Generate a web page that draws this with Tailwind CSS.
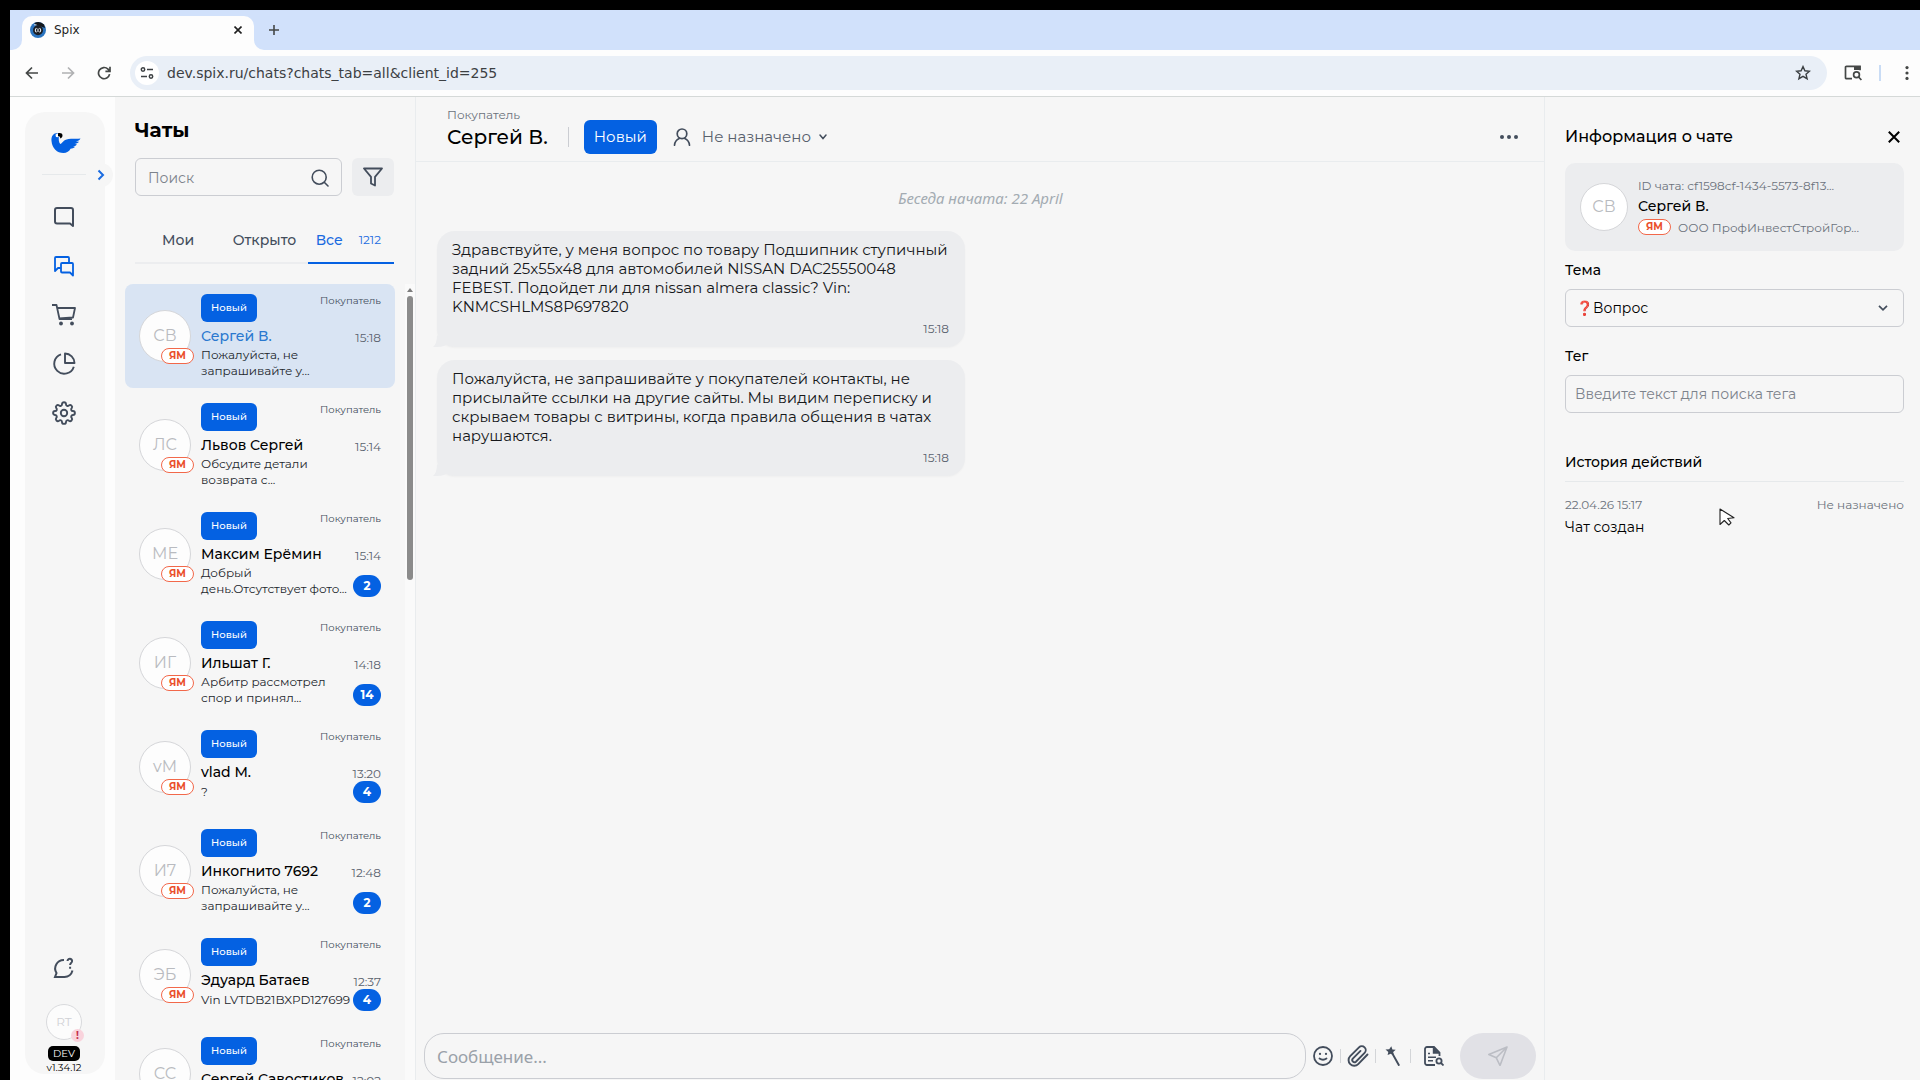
<!DOCTYPE html>
<html lang="ru">

<head>
  <meta charset="UTF-8">
  <meta name="viewport" content="width=device-width, initial-scale=1.0">
  <title>Spix</title>
  <script src="https://cdn.jsdelivr.net/npm/@tailwindcss/browser@4"></script>
</head>

<body class="h-screen overflow-hidden flex flex-col border-l-10 border-t-10 border-black bg-[#fdfdfd] text-black font-['Montserrat','Inter',sans-serif]">

  <!-- Browser tabs -->
  <div class="h-10 shrink-0 bg-[#d1e1fb] flex items-end pl-3 font-['DejaVu_Sans','Noto_Sans',sans-serif]">
    <div class="relative h-[34px] w-[232px] bg-[#fdfdfd] rounded-t-[10px] flex items-center pl-2 pr-2 pb-1.5">
      <svg class="absolute bottom-0 -left-2.5 w-2.5 h-2.5" viewBox="0 0 10 10"><path d="M10 0v10H0A10 10 0 0 0 10 0z" fill="#fdfdfd" /></svg>
      <svg class="absolute bottom-0 -right-2.5 w-2.5 h-2.5" viewBox="0 0 10 10"><path d="M0 0v10h10A10 10 0 0 1 0 0z" fill="#fdfdfd" /></svg>
      <svg class="w-4 h-4" viewBox="0 0 16 16">
        <circle cx="8" cy="8" r="8" fill="#2a74c0" />
        <path d="M4.500 1Q10-1.400 14 2.600L15 6 11 4.500 5 3z" fill="#15181c" />
        <circle cx="8" cy="8.200" r="5" fill="#1b1e24" />
        <path d="M4 2.800h2.500" stroke="#cfe0f2" stroke-width="1" />
        <path d="M6.600 6.200A2.200 2.200 0 0 0 6.600 10.200M9.400 6.200a2.200 2.200 0 0 1 0 4M8 6.500v3.500" fill="none" stroke="#e8eef4" stroke-width="1.100" />
      </svg>
      <span class="ml-2 flex-1 text-[12px] text-[#1f1f1f]">Spix</span>
      <button aria-label="Закрыть вкладку" class="w-4 h-4 flex items-center justify-center">
        <svg class="w-2 h-2" viewBox="0 0 8 8" stroke="#1f1f1f" stroke-width="1.600"><path d="M.5.5l7 7M7.500.5l-7 7" /></svg>
      </button>
    </div>
    <button aria-label="Новая вкладка" class="w-10 h-[28px] mb-1.5 flex items-center justify-center">
      <svg class="w-2.5 h-2.5" viewBox="0 0 10 10" stroke="#444746" stroke-width="1.600"><path d="M5 0v10M0 5h10" /></svg>
    </button>
  </div>

  <!-- Address bar -->
  <div class="h-[47px] shrink-0 bg-[#fdfdfd] border-b border-[#d5d9d8] flex items-center font-['DejaVu_Sans','Noto_Sans',sans-serif]">
    <div class="w-[120px] flex items-center justify-between pl-[15px] pr-[19px]">
      <button aria-label="Назад"><svg class="w-3.5 h-3.5" viewBox="0 0 14 14" fill="none" stroke="#444746" stroke-width="1.700"><path d="M13 7H2M7 1.500L1.500 7 7 12.500" /></svg></button>
      <button aria-label="Вперёд" disabled><svg class="w-3.5 h-3.5" viewBox="0 0 14 14" fill="none" stroke="#b0b1b3" stroke-width="1.700"><path d="M1 7h11M7 1.500L12.500 7 7 12.500" /></svg></button>
      <button aria-label="Обновить"><svg class="w-3.5 h-3.5" viewBox="0 0 14 14" fill="none" stroke="#444746" stroke-width="1.700"><path d="M12.600 8.200A5.600 5.600 0 1 1 11 3.100L13 5.200M13 .8v4.600H8.400" /></svg></button>
    </div>
    <div class="flex-1 h-[34px] bg-[#e9eff7] rounded-full flex items-center pl-[5px] pr-4">
      <div class="w-6 h-6 rounded-full bg-white flex items-center justify-center">
        <svg class="w-3.5 h-3.5" viewBox="0 0 14 14" fill="none" stroke="#3c4043" stroke-width="1.500"><circle cx="3" cy="3.500" r="1.700" /><path d="M7 3.500h6M1 10.500h6" /><circle cx="11" cy="10.500" r="1.700" /></svg>
      </div>
      <input aria-label="Адресная строка" class="ml-2 flex-1 bg-transparent outline-none text-[14px] text-[#3c4043]" value="dev.spix.ru/chats?chats_tab=all&amp;client_id=255">
      <button aria-label="В закладки"><svg class="w-4 h-4" viewBox="0 0 16 16" fill="none" stroke="#3c4043" stroke-width="1.400"><path d="M8 1.600l1.900 4.200 4.600.4-3.500 3 1.100 4.500L8 11.300l-4.100 2.400L5 9.200l-3.500-3 4.600-.4z" /></svg></button>
    </div>
    <div class="w-[93px] flex items-center pl-[17px]">
      <button aria-label="Поиск по вкладке"><svg class="w-[18px] h-4" viewBox="0 0 18 16" fill="none" stroke="#444746" stroke-width="1.700"><path d="M8 13.700H2.500a1 1 0 0 1-1-1V2.300a1 1 0 0 1 1-1H16v4" /><path d="M10 1h6.500v4H10z" fill="#444746" stroke="none" /><circle cx="12.500" cy="9.800" r="2.900" /><path d="M14.600 12l2.800 3" /></svg></button>
      <div class="ml-[17px] w-0.5 h-4 bg-[#c9dcf5]"></div>
      <button aria-label="Меню" class="ml-6"><svg class="w-1 h-3.5" viewBox="0 0 4 14" fill="#444746"><circle cx="2" cy="1.600" r="1.600" /><circle cx="2" cy="7" r="1.600" /><circle cx="2" cy="12.400" r="1.600" /></svg></button>
    </div>
  </div>

  <div class="flex-1 min-h-0 flex">

    <!-- Navigation rail -->
    <nav class="w-[105px] shrink-0 pl-[15px] pr-2.5 pt-[15px] pb-1.5 flex">
      <div class="relative w-20 bg-[#f6f6f6] rounded-[20px] flex flex-col items-center pt-5 pr-0.5">
        <svg class="ml-1 w-[30px] h-[22px]" viewBox="0 0 30 22">
          <path d="M.5 9C0 4 2.500 1 6.500 1c1.500 0 2 1 1.500 3-.6 3-.2 6.500 1.200 8 2-.3 2.800-4.200 8.300-5 4-.6 8 0 12-.5-1 1.800-2.500 2.600-4.500 3l3 .2c-1.200 1.500-2.800 2-4.500 2.100l2.500.6c-1.200 1.300-2.500 1.800-4 1.900l2 .7c-1.500 1.200-3 1.500-4.500 1.800C18.500 19.500 15.500 21 12.500 21 6 21 1.200 16.500.5 9z" fill="#0461e2" />
          <path d="M4.500 2.800C5.500 1.400 6.800 1.200 8 1.600L7.300 5.200 5 5z" fill="#fff" />
          <path d="M7 1.200c2.200-.6 4.500 0 4.500 2.200 0 1.500-.8 2.300-2.200 3C9.300 5 8.500 4 7 4z" fill="#000" />
        </svg>
        <div class="mt-5 w-11 h-px bg-[#e6e9eb]"></div>
        <button aria-label="Развернуть меню" class="absolute top-[51px] -right-2 w-6 h-6 rounded-full bg-[#f6f6f6] flex items-center justify-start pl-2">
          <svg class="w-2 h-3" viewBox="0 0 8 12" fill="none" stroke="#1a6be0" stroke-width="2"><path d="M1.500 1.500L6 6l-4.500 4.500" /></svg>
        </button>
        <div class="mt-[30px] flex flex-col gap-[25px] text-[#434d5c]">
          <a href="#" aria-label="Сообщения"><svg class="w-6 h-6" viewBox="0 0 24 24" fill="none" stroke="currentColor" stroke-width="2" stroke-linejoin="round"><path d="M21 21l-3-2.500H5a2 2 0 0 1-2-2V5a2 2 0 0 1 2-2h14a2 2 0 0 1 2 2z" /></svg></a>
          <a href="#" aria-label="Чаты" class="text-[#0461e2]"><svg class="w-6 h-6" viewBox="0 0 24 24" fill="none" stroke="currentColor" stroke-width="1.800" stroke-linejoin="round"><path d="M8.500 14H6l-3 3V4a1 1 0 0 1 1-1h12a1 1 0 0 1 1 1v4" /><path d="M10 9h10a1 1 0 0 1 1 1v11.500L18 18.500h-8a1 1 0 0 1-1-1V10a1 1 0 0 1 1-1z" /></svg></a>
          <a href="#" aria-label="Заказы"><svg class="w-6 h-6" viewBox="0 0 24 24" fill="none" stroke="currentColor" stroke-width="1.800" stroke-linejoin="round"><path d="M0 2h4.500l3 14h12.500M5 5h18l-2 9.500L7 15.500" /><circle cx="9" cy="20.500" r="1.900" fill="currentColor" stroke="none" /><circle cx="20" cy="20.500" r="1.900" fill="currentColor" stroke="none" /></svg></a>
          <a href="#" aria-label="Статистика"><svg class="w-6 h-6" viewBox="0 0 24 24" fill="none" stroke="currentColor" stroke-width="1.900" stroke-linejoin="round"><path d="M9 2.300a10 10 0 1 0 12.800 12.400" /><path d="M13 1.500V11h9.500A9.600 9.600 0 0 0 13 1.500z" /></svg></a>
          <a href="#" aria-label="Настройки"><svg class="w-6 h-6" viewBox="0 0 24 24" fill="none" stroke="currentColor" stroke-width="1.900" stroke-linejoin="round"><circle cx="12" cy="12" r="3.200" /><path d="M10 3.200a2 2 0 0 1 4 0c0 1.600 1.800 2.300 2.900 1.200a2 2 0 0 1 2.800 2.800c-1.100 1.100-.4 2.800 1.200 2.800a2 2 0 0 1 0 4c-1.600 0-2.300 1.800-1.200 2.900a2 2 0 0 1-2.800 2.800c-1.100-1.100-2.900-.4-2.900 1.200a2 2 0 0 1-4 0c0-1.600-1.800-2.300-2.900-1.200a2 2 0 0 1-2.800-2.800c1.100-1.100.4-2.900-1.200-2.900a2 2 0 0 1 0-4c1.600 0 2.300-1.700 1.200-2.800a2 2 0 0 1 2.800-2.800c1.100 1.100 2.900.4 2.900-1.200z" /></svg></a>
        </div>
        <div class="mt-auto flex flex-col items-center">
          <a href="#" aria-label="Помощь" class="text-[#434d5c]"><svg class="w-6 h-6" viewBox="0 0 24 24" fill="none" stroke="currentColor" stroke-width="2"><path d="M12 4a8.500 8.500 0 0 0-7.500 13L3 21h9.500a8.500 8.500 0 0 0 8-6.500" /><path d="M15.500 5a2.300 2.300 0 1 1 3.800 1.800c-.7.600-1.200 1-1.200 2.200M18.100 10.700v2" /></svg></a>
          <div class="relative mt-6 w-9 h-9 rounded-full border border-[#d9dadd] bg-[#fcfcfc] flex items-center justify-center text-[12px] text-[#d0d1d5]">
            RT
            <span class="absolute -right-[3px] -bottom-[3px] w-[13px] h-[13px] rounded-full bg-[#f9d3dc] text-[#c5304f] text-[10px] font-bold leading-[13px] text-center">!</span>
          </div>
          <span class="mt-1.5 h-[15px] w-8 rounded-[5px] bg-black text-white text-[10px] leading-[15px] text-center">DEV</span>
          <span class="text-[10px] leading-[13px]">v1.34.12</span>
        </div>
      </div>
    </nav>

    <!-- Chat list -->
    <section class="w-[301px] shrink-0 bg-[#f6f6f6] border-r border-[#e9ecee] flex flex-col">
      <div class="pl-5 pr-[21px] pt-[18px]">
        <h1 class="text-[20px] leading-[30px] font-bold">Чаты</h1>
        <div class="mt-[13px] flex gap-2.5">
          <label class="flex-1 min-w-0 h-[38px] rounded-md border border-[#cbcdd2] flex items-center px-3 pt-0.5">
            <input class="flex-1 min-w-0 bg-transparent outline-none text-[14px] placeholder:text-[#7d838c]" placeholder="Поиск" aria-label="Поиск">
            <svg class="w-[18px] h-[18px]" viewBox="0 0 18 18" fill="none" stroke="#434d5c" stroke-width="1.600" stroke-linecap="round"><circle cx="8.200" cy="8.200" r="7" /><path d="M13.500 13.500l3.500 3.500" /></svg>
          </label>
          <button aria-label="Фильтр" class="w-[42px] h-[38px] rounded-md bg-[#ecedef] flex items-center justify-center">
            <svg class="w-5 h-5" viewBox="0 0 20 20" fill="none" stroke="#434d5c" stroke-width="1.800" stroke-linejoin="round"><path d="M1 1.500h18l-7 8.300v8.700l-4-2V9.800z" /></svg>
          </button>
        </div>
        <div class="mt-5 h-12 grid grid-cols-3 text-[14px] font-medium text-[#434d5c]">
          <button class="border-b-2 border-[#ecedef] pt-0.5">Мои</button>
          <button class="border-b-2 border-[#ecedef] pt-0.5">Открыто</button>
          <button class="border-b-2 border-[#0461e2] text-[#1a6be0] flex items-center justify-between pl-2 pr-[13px] pt-0.5">Все <span class="text-[12px] font-normal">1212</span></button>
        </div>
      </div>
      <div class="mt-5 flex-1 min-h-0 flex">
        <div id="chat-list" class="flex-1 min-w-0 pl-2.5 pr-2.5 overflow-hidden"></div>
        <div class="w-2.5 bg-[#fafafa] flex flex-col items-center">
          <svg class="mt-1 w-1.5 h-1" viewBox="0 0 6 4"><path d="M3 0l3 4H0z" fill="#7d7d7d" /></svg>
          <div class="mt-1 w-1.5 h-[284px] rounded-full bg-[#8b8b8b]"></div>
        </div>
      </div>
    </section>

    <!-- Conversation -->
    <main class="flex-1 min-w-0 bg-[#f6f6f6] flex flex-col">
      <header class="h-[65px] shrink-0 border-b border-[#e9ecee] flex items-end pl-[31px] pr-[26px] pb-[7px]">
        <div>
          <div class="text-[12px] leading-[10px] text-[#6b727c]">Покупатель</div>
          <h2 class="text-[20px] leading-[34px] font-medium">Сергей В.</h2>
        </div>
        <div class="ml-5 mb-[7px] w-px h-5 bg-[#cbcdd2]"></div>
        <button class="ml-[15px] w-[73px] h-[34px] rounded-md bg-[#0461e2] text-white text-[15px]">Новый</button>
        <button class="ml-4 h-[34px] flex items-center text-[15px] text-[#59616d]">
          <svg class="w-[18px] h-[18px] mr-[11px]" viewBox="0 0 18 18" fill="none" stroke="#434d5c" stroke-width="1.700" stroke-linecap="round"><circle cx="9" cy="5.800" r="4.800" /><path d="M1.500 17.200c.3-3.400 2.200-5.600 4.700-6.700M16.500 17.200c-.3-3.400-2.200-5.600-4.700-6.700" /></svg>
          Не назначено
          <svg class="ml-2 w-2 h-1.5" viewBox="0 0 8 6" fill="none" stroke="#434d5c" stroke-width="1.500" stroke-linecap="round"><path d="M1 1l3 3.500L7 1" /></svg>
        </button>
        <button aria-label="Ещё" class="ml-auto h-[34px]">
          <svg class="w-[18px] h-1" viewBox="0 0 18 4" fill="#434d5c"><circle cx="2" cy="2" r="2" /><circle cx="9" cy="2" r="2" /><circle cx="16" cy="2" r="2" /></svg>
        </button>
      </header>
      <div class="flex-1 min-h-0 pt-6 pl-[21px] pr-5">
        <p class="text-center font-['Noto_Sans',sans-serif] text-[15px] leading-6 italic text-[#a3abb2]">Беседа начата: 22 April</p>
        <div class="mt-[21px] relative w-[528px] rounded-[18px] bg-[#ecedef] shadow-xs shadow-black/3 pl-[15px] pr-4 pt-[9px] pb-2.5">
          <svg class="absolute -left-1 bottom-0 w-4 h-3" viewBox="0 0 16 12"><path d="M4 0Q4 9 0 12h4q8 0 12-4z" fill="#ecedef" /></svg>
          <p class="text-[15px] leading-[19px] text-[#16181b]">Здравствуйте, у меня вопрос по товару Подшипник ступичный задний 25x55x48 для автомобилей NISSAN DAC25550048 FEBEST. Подойдет ли для nissan almera classic? Vin: KNMCSHLMS8P697820</p>
          <div class="mt-1 text-right text-[12px] leading-[17px] text-[#59616d]">15:18</div>
        </div>
        <div class="mt-[13px] relative w-[528px] rounded-[18px] bg-[#ecedef] shadow-xs shadow-black/3 pl-[15px] pr-4 pt-[9px] pb-2.5">
          <svg class="absolute -left-1 bottom-0 w-4 h-3" viewBox="0 0 16 12"><path d="M4 0Q4 9 0 12h4q8 0 12-4z" fill="#ecedef" /></svg>
          <p class="text-[15px] leading-[19px] text-[#16181b]">Пожалуйста, не запрашивайте у покупателей контакты, не присылайте ссылки на другие сайты. Мы видим переписку и скрываем товары с витрины, когда правила общения в чатах нарушаются.</p>
          <div class="mt-1 text-right text-[12px] leading-[17px] text-[#59616d]">15:18</div>
        </div>
      </div>
      <div class="shrink-0 flex items-center pl-2 pr-2 pb-px text-[#434d5c]">
        <input aria-label="Сообщение" placeholder="Сообщение..." class="flex-1 min-w-0 h-[46px] rounded-[20px] border border-[#cbcdd2] bg-transparent outline-none px-3 font-['Noto_Sans',sans-serif] text-[17px] placeholder:text-[#9aa1a9]">
        <button aria-label="Эмодзи" class="w-[34px] flex justify-center"><svg class="w-5 h-5" viewBox="0 0 20 20" fill="none" stroke="currentColor" stroke-width="1.800" stroke-linecap="round"><circle cx="10" cy="10" r="9" /><path d="M6.500 12.500q3.500 2.500 7 0" /><path d="M7 7.800v.1M13 7.800v.1" stroke-width="2.200" /></svg></button>
        <div class="w-px h-3.5 bg-[#d3d5d8]"></div>
        <button aria-label="Прикрепить файл" class="w-[34px] flex justify-center"><svg class="w-[22px] h-[22px]" viewBox="0 0 22 22" fill="none" stroke="currentColor" stroke-width="1.900" stroke-linecap="round"><path d="M20.500 9.500l-9.300 9.600a5.600 5.600 0 0 1-8-7.900L12 2.400a3.900 3.900 0 0 1 5.600 5.500l-8.700 8.800a2.200 2.200 0 0 1-3.100-3.100l7.700-7.700" /></svg></button>
        <div class="w-px h-3.5 bg-[#d3d5d8]"></div>
        <button aria-label="Быстрый ответ" class="w-[34px] flex justify-center"><svg class="w-5 h-5" viewBox="0 0 20 20"><path d="M8.300.3l1.100 3.100 3.300.3-2.500 2.300.5 3.500-2.900-1.700-3.200 1.300.7-3.200L2.500 3.500l3.700-.2z" fill="currentColor" /><path d="M8.500 6l7.300 13" stroke="currentColor" stroke-width="1.900" stroke-linecap="round" /></svg></button>
        <div class="w-px h-3.5 bg-[#d3d5d8]"></div>
        <button aria-label="Шаблоны" class="mr-1 w-[45px] flex justify-center"><svg class="w-5 h-5" viewBox="0 0 20 20" fill="none" stroke="currentColor" stroke-width="1.800"><path d="M11 19H3a2 2 0 0 1-2-2V3a2 2 0 0 1 2-2h7l5.500 5.500V10" /><path d="M9.500 1v6h6" fill="currentColor" stroke-width="1.400" /><path d="M4 7.500h2M4 11.200h8M4 14.800h5" stroke-width="1.600" /><circle cx="15" cy="15" r="2.600" /><path d="M17 17l2.500 2.500" /></svg></button>
        <button aria-label="Отправить" class="w-[76px] h-[46px] rounded-full bg-[#e1e1e6] text-[#bbbdc4] flex items-center justify-center"><svg class="w-5 h-5" viewBox="0 0 20 20" fill="none" stroke="currentColor" stroke-width="1.600" stroke-linejoin="round"><path d="M19 1L.8 8.500l7.500 3.300L12 19.500zM8.300 11.800L19 1" /></svg></button>
      </div>
    </main>

    <!-- Chat info -->
    <aside class="relative w-[376px] shrink-0 bg-[#f6f6f6] border-l border-[#e9ecee] pl-5 pr-4 pt-[27px]">
      <div class="flex items-center justify-between pr-1">
        <h2 class="text-[16px] leading-[26px] font-medium">Информация о чате</h2>
        <button aria-label="Закрыть" class="w-3 h-3"><svg class="w-3 h-3" viewBox="0 0 12 12" stroke="#000" stroke-width="2"><path d="M.8.8l10.400 10.400M11.200.8L.8 11.200" /></svg></button>
      </div>
      <div class="mt-[13px] h-[88px] rounded-[10px] bg-[#ecedef] flex items-center gap-2.5 pl-[15px]">
        <div class="w-12 h-12 rounded-full border border-[#d5d6d9] bg-white flex items-center justify-center text-[16px] text-[#b9bbc0]">СВ</div>
        <div class="pb-0.5">
          <div class="text-[12px] leading-[21px] text-[#6b727c]">ID чата: cf1598cf-1434-5573-8f13...</div>
          <div class="text-[14px] leading-[21px] font-medium">Сергей В.</div>
          <div class="flex items-center gap-[7px] text-[12px] leading-[21px] text-[#6b727c]">
            <span class="w-[33px] h-4 rounded-full border border-[#f2684a] bg-white text-[#ea4f2c] text-[10px] leading-[14px] font-bold text-center">ЯМ</span>
            ООО ПрофИнвестСтройГор...
          </div>
        </div>
      </div>
      <label for="topic" class="mt-[9px] block text-[14px] leading-5 font-medium">Тема</label>
      <div class="relative mt-[9px]">
        <select id="topic" class="appearance-none w-full h-[38px] rounded-md border border-[#cbcdd2] bg-transparent px-2.5 text-[14px]">
          <option>❓Вопрос</option>
        </select>
        <svg class="absolute right-4 top-4 w-2.5 h-1.5 pointer-events-none" viewBox="0 0 10 6" fill="none" stroke="#434d5c" stroke-width="1.700"><path d="M1 .8l4 4 4-4" /></svg>
      </div>
      <label for="tag" class="mt-[19px] block text-[14px] leading-5 font-medium">Тег</label>
      <input id="tag" placeholder="Введите текст для поиска тега" class="mt-[9px] block w-full h-[38px] rounded-md border border-[#cbcdd2] bg-transparent px-[9px] text-[14px] placeholder:text-[#7d838c]">
      <h3 class="mt-[39px] pb-[9px] border-b border-[#e6e9eb] text-[14px] leading-5 font-medium">История действий</h3>
      <div class="mt-[15px] flex justify-between text-[12px] leading-4 text-[#6b727c]">
        <span>22.04.26 15:17</span>
        <span>Не назначено</span>
      </div>
      <p class="mt-1 text-[14px] leading-5">Чат создан</p>
      <svg class="absolute left-[174px] top-[411px] w-4 h-[18px]" viewBox="0 0 16 18"><path d="M1 1v15.500l4.300-4 4.500 4.500 2.200-2.200-3.300-4.300L15 9.800z" fill="#fff" stroke="#222" stroke-width="1.100" stroke-linejoin="round" /></svg>
    </aside>
  </div>

  <script>
    const chats = [
      { initials: "СВ", name: "Сергей В.", time: "15:18", lines: ["Пожалуйста, не", "запрашивайте у..."], active: true },
      { initials: "ЛС", name: "Львов Сергей", time: "15:14", lines: ["Обсудите детали", "возврата с..."] },
      { initials: "МЕ", name: "Максим Ерёмин", time: "15:14", lines: ["Добрый", "день.Отсутствует фото..."], count: 2 },
      { initials: "ИГ", name: "Ильшат Г.", time: "14:18", lines: ["Арбитр рассмотрел", "спор и принял..."], count: 14 },
      { initials: "vM", name: "vlad M.", time: "13:20", lines: ["?"], count: 4 },
      { initials: "И7", name: "Инкогнито 7692", time: "12:48", lines: ["Пожалуйста, не", "запрашивайте у..."], count: 2 },
      { initials: "ЭБ", name: "Эдуард Батаев", time: "12:37", lines: ["Vin LVTDB21BXPD127699"], count: 4 },
      { initials: "СС", name: "Сергей Савостиков", time: "12:02", lines: [] }
    ];

    document.getElementById("chat-list").innerHTML = chats.map(chat => `
      <a href="#" class="mb-[5px] flex items-center gap-2.5 pl-3.5 pr-3.5 rounded-lg ${chat.lines.length > 1 ? "h-[104px]" : "h-[94px]"} ${chat.active ? "bg-[#d9e4f3]" : ""}">
        <div class="relative w-[52px] h-[52px] shrink-0 rounded-full border border-[#d5d6d9] bg-[#fdfdfd] flex items-center justify-center text-[16px] text-[#b9bbc0]">
          ${chat.initials}
          <span class="absolute -right-1 -bottom-[3px] w-[33px] h-4 rounded-full border border-[#f2684a] bg-white text-[#ea4f2c] text-[10px] leading-[14px] font-bold text-center">ЯМ</span>
        </div>
        <div class="flex-1 min-w-0 h-full pt-2.5">
          <div class="flex justify-between">
            <span class="w-14 h-7 rounded-md bg-[#0461e2] text-white text-[10px] leading-7 font-medium text-center">Новый</span>
            <span class="text-[10px] leading-[14px] text-[#434d5c]">Покупатель</span>
          </div>
          <div class="mt-[3px] flex justify-between whitespace-nowrap">
            <span class="text-[14px] leading-[22px] font-medium ${chat.active ? "text-[#2a78cf]" : ""}">${chat.name}</span>
            <span class="text-[12px] leading-[26px] -mb-1 text-[#59616d]">${chat.time}</span>
          </div>
          <div class="flex justify-between whitespace-nowrap ${chat.lines.length > 1 ? "h-8 items-end" : "h-[18px] items-center"}">
            <span class="text-[12px] leading-4 text-[#23272d]">${chat.lines.join("<br>")}</span>
            ${chat.count ? `<span class="w-7 h-[22px] rounded-full bg-[#0461e2] text-white text-[12px] leading-[22px] font-bold text-center">${chat.count}</span>` : ""}
          </div>
        </div>
      </a>`).join("");
  </script>
</body>

</html>
